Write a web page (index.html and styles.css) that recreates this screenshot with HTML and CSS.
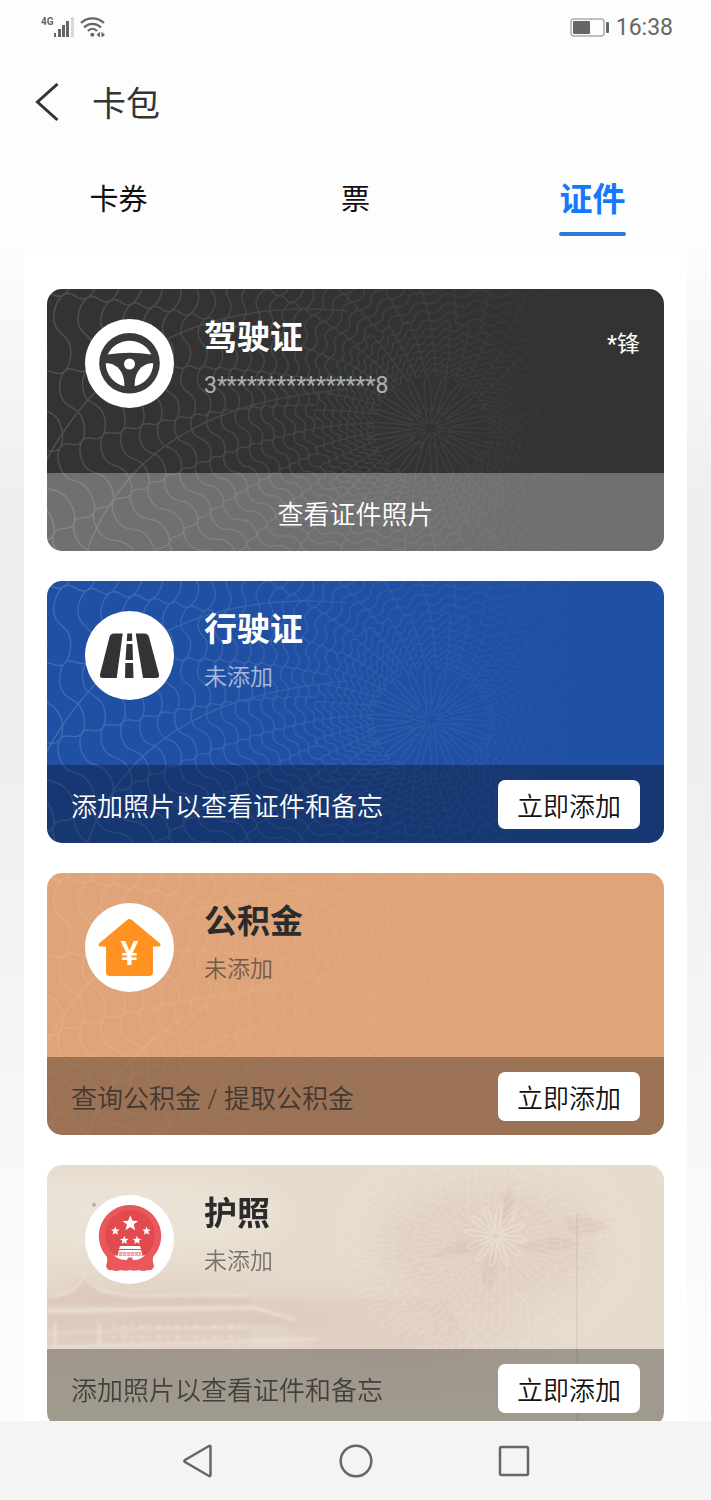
FILE: index.html
```html
<!DOCTYPE html>
<html lang="zh-CN">
  <head>
    <meta charset="UTF-8" />
    <meta name="viewport" content="width=device-width, initial-scale=1.0" />
    <title>卡包</title>
    <link rel="stylesheet" href="styles.css">
  </head>
  <body>
    <!-- shared guilloche lines, path data is filled in by script.js -->
    <svg class="defs" width="0" height="0" aria-hidden="true">
      <defs>
        <linearGradient id="fade" gradientUnits="userSpaceOnUse" x1="0" y1="0" x2="540" y2="0">
          <stop offset="0" stop-color="#fff" stop-opacity="0.15" />
          <stop offset="0.5" stop-color="#fff" stop-opacity="0.08" />
          <stop offset="0.75" stop-color="#fff" stop-opacity="0.05" />
          <stop offset="1" stop-color="#fff" stop-opacity="0" />
        </linearGradient>
        <symbol id="waves" viewBox="0 0 616 262" preserveAspectRatio="xMidYMid slice">
          <path id="wave-path" fill="none" stroke="url(#fade)" stroke-width="1.4" />
        </symbol>
        <path id="star" d="M0-10 2.6-3.3 9.5-3.1 4.1 1.3 5.9 8.1 0 4.3-5.9 8.1-4.1 1.3-9.5-3.1-2.6-3.3z" />
      </defs>
    </svg>

    <div class="statusbar">
      <div class="signals">
        <span class="network">4G</span>
        <svg class="bars" width="20" height="20" viewBox="0 0 20 20">
          <g fill="#666">
            <rect x="0" y="16" width="2" height="4" />
            <rect x="4" y="12" width="3" height="8" />
            <rect x="8" y="8" width="3" height="12" />
            <rect x="12" y="4" width="3" height="16" />
          </g>
          <rect x="17" y="0" width="3" height="20" fill="#d8d8d8" />
        </svg>
        <svg width="26" height="20" viewBox="0 0 26 20">
          <g fill="none" stroke="#666" stroke-width="2.2">
            <path d="M1 6C7.500-.2 17.500-.2 24 6" />
            <path d="M4 10.500C9 5.700 16 5.700 21 10.500" />
            <path d="M8 14C10.500 11 14.500 11 17 14" />
          </g>
          <circle cx="12.300" cy="17.800" r="2" fill="#666" />
          <path d="M16.500 17.700l3.500-3v6zM25 17.700l-3.500-3v6z" fill="#666" />
        </svg>
      </div>
      <div class="power">
        <svg width="39" height="19" viewBox="0 0 39 19">
          <rect x="1" y="1" width="33" height="17" rx="3" fill="none" stroke="#aaa" stroke-width="1.500" />
          <rect x="3" y="3" width="17" height="13" rx="1" fill="#666" />
          <rect x="36" y="4" width="3" height="11" rx="1" fill="#666" />
        </svg>
        <time>16:38</time>
      </div>
    </div>

    <header class="header">
      <button class="back" aria-label="返回">
        <svg width="26" height="42" viewBox="0 0 26 42"><path d="M23.500 1 3.500 19 23.500 37" fill="none" stroke="#333" stroke-width="3" /></svg>
      </button>
      <h1>卡包</h1>
    </header>

    <nav class="tabs">
      <button class="tab">卡券</button>
      <button class="tab">票</button>
      <button class="tab active">证件</button>
    </nav>

    <main class="content">
      <div class="panel">
        <section class="card card-dark">
          <svg class="card-bg" aria-hidden="true"><use href="#waves" width="100%" height="100%" /></svg>
          <div class="card-main">
            <svg class="card-icon" viewBox="0 0 89 89">
              <circle cx="44.500" cy="44.500" r="44.500" fill="#fff" />
              <circle cx="44.500" cy="44.200" r="30.300" fill="#3a3a3a" />
              <g fill="#fff">
                <path d="M22.700 35.600A24 24 0 0 1 66.300 35.600Q44.500 31.800 22.700 35.600z" />
                <path d="M20.700 44.300A24 24 0 0 0 39.300 67.200C39.800 55 33.500 44 20.700 44.300z" />
                <path d="M68.300 44.300A24 24 0 0 1 49.700 67.200C49.200 55 55.500 44 68.300 44.300z" />
                <circle cx="44.500" cy="45" r="5.500" />
              </g>
            </svg>
            <div class="card-text">
              <h2>驾驶证</h2>
              <p class="number">3****************8</p>
            </div>
            <span class="owner">*锋</span>
          </div>
          <button class="card-foot view">查看证件照片</button>
        </section>

        <section class="card card-blue">
          <svg class="card-bg" aria-hidden="true"><use href="#waves" width="100%" height="100%" /></svg>
          <div class="card-main">
            <svg class="card-icon" viewBox="0 0 89 89">
              <circle cx="44.500" cy="44.500" r="44.500" fill="#fff" />
              <g fill="#333">
                <path d="M29 22.500H37.700L31.700 67H18Q14.300 67 15 63.500L24.500 26Q25.500 22.500 29 22.500z" />
                <path d="M50.700 22.500H59.500Q63 22.500 64 26L74 63.500Q74.700 67 71 67H58z" />
                <path d="M42.300 22.500H47L47.300 30H41.700zM41.500 33H47.500L48 49H40.500zM40.300 52H48L48.500 67H40z" />
              </g>
            </svg>
            <div class="card-text">
              <h2>行驶证</h2>
              <p>未添加</p>
            </div>
          </div>
          <div class="card-foot">
            <span>添加照片以查看证件和备忘</span>
            <button class="add">立即添加</button>
          </div>
        </section>

        <section class="card card-orange">
          <svg class="card-bg" aria-hidden="true"><use href="#waves" width="100%" height="100%" /></svg>
          <div class="card-main">
            <svg class="card-icon" viewBox="0 0 89 89">
              <circle cx="44.500" cy="44.500" r="44.500" fill="#fff" />
              <path d="M42 17Q44.500 15 47 17L75 40.500Q76.500 43.500 73.500 43.500H68V69Q68 73 64 73H25Q21 73 21 69V43.500H15.500Q12.500 43.500 14 40.500z" fill="#ff9220" />
              <text class="yen" x="44.500" y="62" text-anchor="middle">¥</text>
            </svg>
            <div class="card-text">
              <h2>公积金</h2>
              <p>未添加</p>
            </div>
          </div>
          <div class="card-foot">
            <span>查询公积金 / 提取公积金</span>
            <button class="add">立即添加</button>
          </div>
        </section>

        <section class="card card-passport">
          <svg class="card-bg" viewBox="0 0 616 262" preserveAspectRatio="xMidYMid slice" aria-hidden="true">
            <defs>
              <filter id="soft" x="-10%" y="-10%" width="120%" height="120%"><feGaussianBlur stdDeviation="1.5" /></filter>
              <filter id="softer" x="-30%" y="-30%" width="160%" height="160%"><feGaussianBlur stdDeviation="14" /></filter>
            </defs>
            <g filter="url(#softer)">
              <ellipse cx="70" cy="50" rx="170" ry="40" fill="#efe8dc" opacity="0.6" />
              <ellipse cx="110" cy="150" rx="180" ry="34" fill="#dccabd" opacity="0.5" />
              <ellipse cx="350" cy="160" rx="130" ry="40" fill="#dfcfc2" opacity="0.6" />
              <ellipse cx="440" cy="80" rx="110" ry="60" fill="#dcc8bc" opacity="0.5" />
            </g>
            <!-- gate roofs -->
            <g filter="url(#soft)" fill="#cfb0a4">
              <path d="M0 130 22 128 37 108 54 128 200 132 206 142 0 140z" opacity="0.28" />
              <path d="M0 150 210 146 245 158 0 166z" opacity="0.22" />
              <path d="M0 170 200 164 205 178 0 184z" opacity="0.18" />
              <path d="M200 134H400L420 180 270 184z" opacity="0.1" />
            </g>
            <g filter="url(#soft)" fill="none" stroke="#f5eee3" stroke-width="2" opacity="0.7">
              <path d="M0 132Q32 130 37 108 44 130 90 131L200 130M0 146 205 142 248 155M0 182 270 174M52 158V180M8 158V182" />
              <path d="M65 162H200M65 172H195" stroke-dasharray="3 5 6 4" />
            </g>
            <!-- darker petals around the flower -->
            <g fill="#cda99f" opacity="0.2" filter="url(#soft)">
              <path d="M455 64Q450 35 462 22 470 45 455 64zM470 82Q510 66 530 78 500 92 470 82zM440 80Q400 95 385 92 410 68 440 80zM445 86Q455 110 438 128 428 105 445 86zM516 55Q545 48 562 62 540 74 520 66z" />
            </g>
            <path id="flower" fill="none" stroke="#f6eee4" stroke-width="1.4" opacity="0.5" />
            <path id="flower-lines" fill="none" stroke="#f4ebe0" stroke-width="1" opacity="0.35" />
            <path d="M529 48V262" stroke="#bfa99b" opacity="0.45" />
            <circle cx="47" cy="40" r="2" fill="#b8b0a8" />
          </svg>
          <div class="card-main">
            <svg class="card-icon" viewBox="0 0 89 89">
              <circle cx="44.500" cy="44.500" r="44.500" fill="#fff" />
              <path d="M45 10A31 31 0 0 1 68 62Q67 66 69 71 68 76 63 75 58 77 54 75 50 76.500 45 75 40 76.500 36 75 31 77 27 75 22 76 21 71 23 66 22 62A31 31 0 0 1 45 10z" fill="#e9595c" />
              <circle cx="45" cy="40" r="25" fill="#e14b50" />
              <path d="M25 60H65V75H25z" fill="#e9595c" />
              <g fill="#fff">
                <use href="#star" transform="translate(45.300 28.500) scale(.82)" />
                <use href="#star" transform="translate(30.300 36) scale(.45)" />
                <use href="#star" transform="translate(61.500 36) scale(.45)" />
                <use href="#star" transform="translate(39.300 45.300) scale(.45)" />
                <use href="#star" transform="translate(52 45.300) scale(.45)" />
                <path d="M35 51H55L56 54H34zM34 55H56L57 57.500H33z" />
                <path d="M33 58H57V60H33zM29 60.500H60Q54 65.500 48 65L47 62.500H43L42 65Q35 65.500 29 60.500z" />
              </g>
              <path d="M35 54.500H55M34 59H56" stroke="#e14b50" stroke-width="1" stroke-dasharray="3 1" />
            </svg>
            <div class="card-text">
              <h2>护照</h2>
              <p>未添加</p>
            </div>
          </div>
          <div class="card-foot">
            <span>添加照片以查看证件和备忘</span>
            <button class="add">立即添加</button>
          </div>
        </section>
      </div>
    </main>

    <footer class="navbar">
      <button aria-label="返回">
        <svg width="34" height="34" viewBox="0 0 34 34"><path d="M29.500 2.500V31.500Q29 32.500 28 32L4 18Q2.500 17 4 16L28 2Q29 1.500 29.500 2.500z" /></svg>
      </button>
      <button aria-label="主屏幕">
        <svg width="34" height="34" viewBox="0 0 34 34"><circle cx="17" cy="17" r="15.300" /></svg>
      </button>
      <button aria-label="最近任务">
        <svg width="34" height="34" viewBox="0 0 34 34"><rect x="3" y="3" width="28" height="28" rx="1.500" /></svg>
      </button>
    </footer>

    <script src="script.js"></script>
  </body>
</html>
```

FILE: styles.css
```css
* {
  box-sizing: border-box;
}
body {
  margin: 0;
  height: 100vh;
  display: flex;
  flex-direction: column;
  background: #fdfdfd;
  color: #333;
  font-family: Roboto, "Noto Sans CJK SC", sans-serif;
}
h1,
h2,
p {
  margin: 0;
}
button {
  padding: 0;
  border: 0;
  background: none;
  color: inherit;
  font: inherit;
}
svg {
  display: block;
}
.defs {
  position: absolute;
}

/* status bar */
.statusbar {
  flex: none;
  display: flex;
  justify-content: space-between;
  align-items: center;
  height: 54px;
  padding: 0 38px 0 41px;
  color: #666;
}
.signals,
.power {
  display: flex;
  align-items: center;
}
.network {
  align-self: flex-start;
  font-size: 10px;
  font-weight: 700;
  line-height: 10px;
}
.bars {
  margin-right: 6px;
}
.power {
  gap: 7px;
  font-size: 23px;
}

/* header */
.header {
  flex: none;
  display: flex;
  align-items: center;
  gap: 32px;
  height: 100px;
  padding-left: 34px;
}
.header h1 {
  font-size: 34px;
  font-weight: 400;
  line-height: 48px;
}

/* tabs */
.tabs {
  flex: none;
  display: flex;
  height: 96px;
}
.tab {
  position: relative;
  flex: 1;
  height: 86px;
  color: #111;
  font-size: 29px;
}
.tab.active {
  color: #1677ff;
  font-size: 33px;
  font-weight: 700;
}
.tab.active::after {
  content: "";
  position: absolute;
  left: 50%;
  bottom: 4px;
  width: 67px;
  height: 4px;
  margin-left: -34px;
  border-radius: 2px;
  background: #2f78dc;
}

/* card list */
.content {
  flex: 1;
  min-height: 0;
  overflow-y: auto;
  scrollbar-width: none;
  padding: 0 24px;
  background: linear-gradient(#fcfcfc, #eee 22%, #efefef 45%, #fafafa 85%, #fcfcfc);
}
.panel {
  display: flex;
  flex-direction: column;
  gap: 30px;
  padding: 39px 23px 30px;
  background: #fff;
}
.card {
  position: relative;
  border-radius: 15px;
  overflow: hidden;
}
.card-bg {
  position: absolute;
  top: 0;
  left: 0;
  width: 100%;
  height: 100%;
}
.card-main {
  position: relative;
  display: flex;
  align-items: flex-start;
  gap: 30px;
  height: 184px;
  padding: 30px 24px 0 38px;
}
.card-icon {
  flex: none;
  width: 89px;
  height: 89px;
}
.card-text {
  flex: 1;
}
.card-text h2 {
  margin-bottom: 12px;
  font-size: 33px;
  font-weight: 700;
  line-height: 38px;
}
.card-text p {
  font-size: 23px;
  font-weight: 350;
  line-height: 34px;
  opacity: 0.6;
}
.card-text .number {
  font-weight: 400;
}
.owner {
  font-size: 23px;
  line-height: 52px;
}
.card-foot {
  position: relative;
  display: flex;
  justify-content: space-between;
  align-items: center;
  width: 100%;
  height: 78px;
  padding: 0 24px;
  background: rgba(0, 0, 0, 0.3);
  font-size: 26px;
  font-weight: 350;
}
.card-foot.view {
  justify-content: center;
  background: rgba(255, 255, 255, 0.3);
}
.add {
  width: 142px;
  height: 49px;
  border-radius: 7px;
  background: #fff;
  color: #111;
}
.yen {
  fill: #fff;
  font-size: 34px;
  font-weight: 500;
}
.card-dark {
  background: #333;
  color: #fff;
}
.card-blue {
  background: #2050a3;
  color: #fff;
}
.card-orange {
  background: #dfa47a;
  color: #2b2b2b;
}
.card-orange .card-bg {
  opacity: 0.7;
}
.card-orange .card-foot > span,
.card-passport .card-foot > span {
  opacity: 0.8;
}
.card-passport {
  background: #e6dbcc;
  color: #2b2b2b;
}

/* system navigation */
.navbar {
  flex: none;
  display: flex;
  justify-content: center;
  height: 79px;
  background: #f4f4f4;
}
.navbar button {
  display: flex;
  justify-content: center;
  align-items: center;
  width: 158px;
}
.navbar svg {
  fill: none;
  stroke: #666;
  stroke-width: 2.5px;
}
```

FILE: script.js
```js
// closed wavy ring around (cx, cy), lean tilts the waves over
function ring(cx, cy, r, amp, waves, phase, squash, lean) {
  const steps = waves * 24;
  let d = "";
  for (let i = 0; i <= steps; i++) {
    const t = (i / steps) * Math.PI * 2;
    const w = waves * t + phase;
    const rr = r + amp * Math.sin(w);
    const a = t + (lean / waves) * (Math.sin(w) - Math.sin(2 * w));
    const x = cx + rr * Math.cos(a);
    const y = cy + rr * Math.sin(a) * squash;
    d += (i ? "L" : "M") + x.toFixed(1) + " " + y.toFixed(1);
  }
  return d;
}

let waves = "";
let radius = 60;
for (let k = 0; radius < 520; k++) {
  const count = radius < 120 ? 36 : 28;
  waves += ring(383, 139, radius, radius * 0.036 + 1, count, k * 0.45, 0.92, 0.4);
  radius += 3 + radius * 0.055;
}
// petals in the middle and two long arcs across the waves
waves += ring(383, 139, 42, 22, 22, 0, 0.8, 0.2);
waves += ring(383, 139, 14, 8, 10, 0, 0.8, 0.2);
waves += "M0 170C60 60 160 10 300 22M40 262C80 150 180 110 300 100";
document.getElementById("wave-path").setAttribute("d", waves);

let flower = ring(448, 71, 18, 13, 12, 0, 1, 0.2);
flower += ring(448, 71, 4, 0, 4, 0, 1, 0);
document.getElementById("flower").setAttribute("d", flower);

// lace around the flower
let lace = "";
for (let k = 0; k < 9; k++) {
  lace += ring(440, 80, 38 + k * 13, 5 + (k % 3) * 3, 18 + k * 5, k * 1.3, 0.75, 0.5);
}
document.getElementById("flower-lines").setAttribute("d", lace);
```
